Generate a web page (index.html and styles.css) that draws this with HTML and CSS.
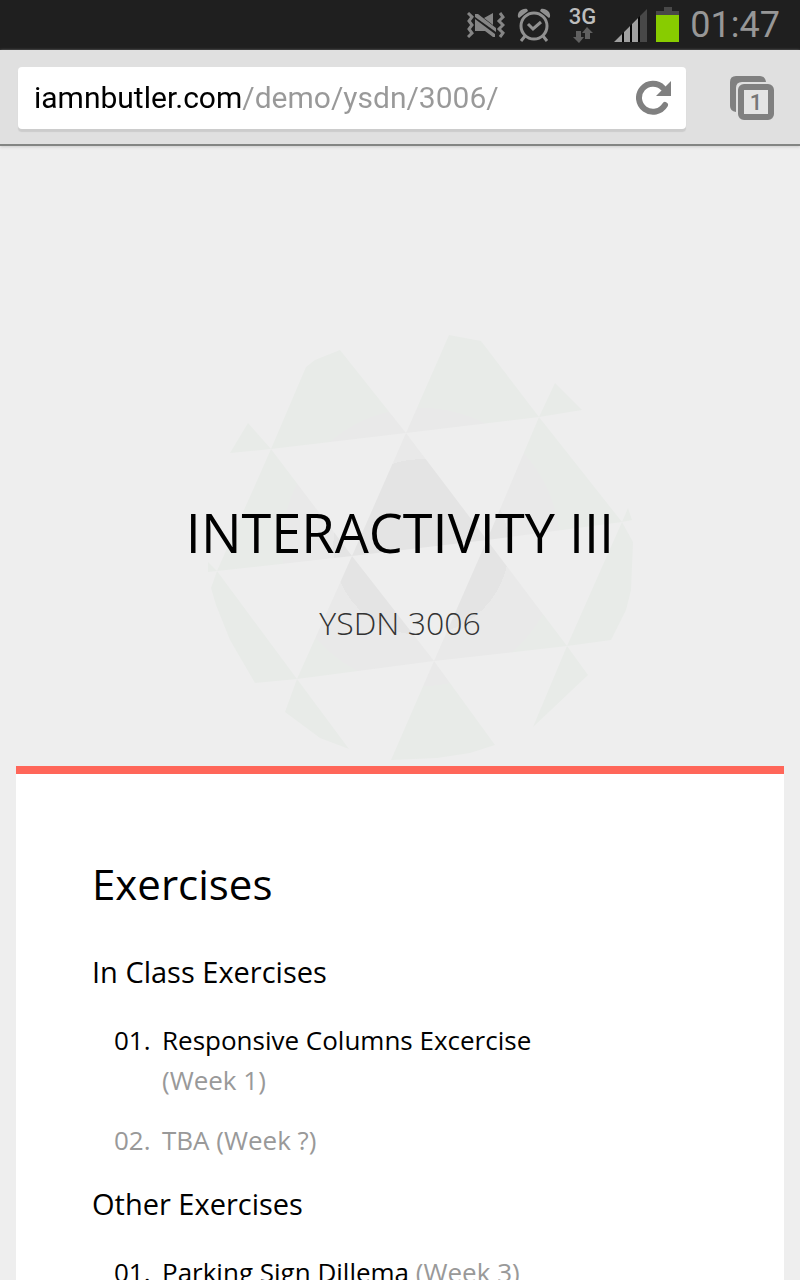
FILE: index.html
```html
<!DOCTYPE html>
<html lang="en">
<head>
<meta charset="utf-8">
<meta name="viewport" content="width=device-width, initial-scale=1">
<title>Interactivity III</title>
<link rel="stylesheet" href="styles.css">
</head>
<body>
<div class="screen">
  <div class="status-bar">
    <svg class="vibrate" width="38" height="26" viewBox="0 0 38 26" role="img" aria-label="Sound off">
      <path fill="none" stroke="#858585" stroke-width="3" d="M1 1l4 4-3 4 3 4-3 4 3 4-4 4M33 1l3 4-4 4 4 4-4 4 4 4-3 4"/>
      <path fill="#858585" d="M8 7l20 15v3h-2l-8-6H8zM8 2h3l18 14v4L8 5zM17 6l9-5v12z"/>
    </svg>
    <svg class="alarm" width="34" height="36" viewBox="0 0 34 36" role="img" aria-label="Alarm set">
      <g fill="none" stroke="#909090" stroke-width="3">
        <circle cx="17" cy="19" r="13"/>
        <path d="m11 17 5 5 8-7M8 29l-4 5M26 29l4 5"/>
      </g>
      <path fill="#909090" d="M1 10C0 5 5 1 10 2l1 2-9 7zM33 10c1-5-4-9-9-8l-1 2 9 7z"/>
    </svg>
    <div class="network">
      <span>3G</span>
      <svg width="20" height="16" viewBox="0 0 20 16" aria-hidden="true"><path fill="#606060" d="M3 4h5v6h3l-5 6-6-6h3zM14 0l6 6h-3v6h-5V6H9z"/></svg>
    </div>
    <svg class="signal" width="34" height="34" viewBox="0 0 34 34" role="img" aria-label="Signal strength">
      <path fill="#060606" d="M0 33 26 7v26z"/>
      <path fill="#a0a0a0" d="M0 33l8-8v8zM10 23l6-6v16h-6zM18 15l6-6v24h-6z"/>
      <path fill="#484848" d="M26 7l7-7v33h-7z"/>
    </svg>
    <svg class="battery" width="24" height="36" viewBox="0 0 24 36" role="img" aria-label="Battery">
      <path fill="#484848" d="M8 0h8v4h7v5H0V4h8z"/><path fill="#8c0" d="M0 8h23v27H0z"/>
    </svg>
    <time class="clock">01:47</time>
  </div>

  <div class="toolbar">
    <div class="omnibox">
      <input class="address" type="text" aria-label="Address" value="iamnbutler.com/demo/ysdn/3006/">
      <button class="icon-button" type="button" aria-label="Reload">
        <svg width="36" height="36" viewBox="0 0 36 36" aria-hidden="true">
          <path fill="none" stroke="#808080" stroke-width="6" stroke-linecap="round" d="M29 25A14 14 0 1 1 27 8"/>
          <path fill="#808080" d="M35 1v15H20z"/>
        </svg>
      </button>
    </div>
    <button class="icon-button tabs" type="button" aria-label="Open tabs: 1">
      <svg width="44" height="44" viewBox="0 0 44 44" aria-hidden="true">
        <path fill="#808080" d="M6 0h24q5 0 6 6H12q-6 0-6 6v24q-6-1-6-6V6q0-6 6-6z"/>
        <rect x="11" y="11" width="30" height="30" rx="3" fill="#e4e4e4" stroke="#808080" stroke-width="6"/>
        <text class="tab-count" x="26" y="34" text-anchor="middle">1</text>
      </svg>
    </button>
  </div>

  <main class="page">
    <header class="hero">
      <svg class="emblem" width="430" height="430" viewBox="206 333 430 430" aria-hidden="true">
        <defs>
          <radialGradient id="rings" gradientUnits="userSpaceOnUse" cx="421" cy="547" r="214">
            <stop offset=".41" stop-color="#e4e4e4"/>
            <stop offset=".41" stop-color="#e9e9e9"/>
            <stop offset=".65" stop-color="#e9e9e9"/>
            <stop offset=".65" stop-color="#e8ebe8"/>
          </radialGradient>
        </defs>
        <path fill="url(#rings)" d="M271 449l35-82 9-7 25-10 66 83zM230 453l18-30 23 26zM406 433l43-98 32 6 58 76zM539 417l16-34 27 27zM271 449l81 107-135 15zM406 433l81 107-135 16zM539 417l83 105-135 18zM622 522l6-14 4 12zM622 522l11 20-2 48-5 20-15 30-44 6zM217 571l80 108-42 4-25-43-14-35-5-17zM352 556l82 105-137 18zM487 540l80 106-133 15zM297 679l52 70-29-11-35-26zM434 661l61 84-25 8-33 5-46 2zM567 646l21 29-55 52zM208 562l9 9-9 1z"/>
      </svg>
      <h1 class="title">INTERACTIVITY III</h1>
      <p class="course">YSDN 3006</p>
    </header>
    <section class="card">
      <h2 class="section-title">Exercises</h2>
      <h3 class="group-title">In Class Exercises</h3>
      <ol class="exercises">
        <li class="exercise"><span>01.</span><p class="entry"><a href="#columns">Responsive Columns Excercise</a> <span class="muted">(Week 1)</span></p></li>
        <li class="exercise muted"><span>02.</span><p class="entry">TBA (Week ?)</p></li>
      </ol>
      <h3 class="group-title">Other Exercises</h3>
      <ol class="exercises">
        <li class="exercise"><span>01.</span><p class="entry"><a href="#parking">Parking Sign Dillema</a> <span class="muted">(Week 3)</span></p></li>
      </ol>
    </section>
  </main>
</div>
</body>
</html>
```
FILE: styles.css
```css
* { box-sizing: border-box; }
body { margin: 0; background: #eee; color: #000; font-family: "Open Sans", sans-serif; }
h1, h2, h3, p, ol { margin: 0; padding: 0; font-weight: 400; }

.screen { display: flex; flex-direction: column; height: 100vh; overflow: hidden; }

.status-bar {
  display: flex;
  flex: none;
  align-items: center;
  justify-content: flex-end;
  height: 50px;
  padding-right: 20px;
  background: #1f1f1f;
  font-family: Roboto, sans-serif;
}
.alarm { margin-left: 12px; }
.network {
  display: flex;
  flex-direction: column;
  align-items: center;
  margin: 0 18px;
  color: #bdbdbd;
  font-size: 22px;
  font-weight: 500;
  line-height: 20px;
}
.signal { margin-top: 2px; }
.battery { margin: 0 10px 0 8px; }
.clock { color: #979797; font-size: 36px; line-height: 48px; }

.toolbar {
  display: flex;
  flex: none;
  align-items: center;
  gap: 44px;
  height: 96px;
  padding: 2px 26px 0 18px;
  background: #e0e0e0;
  border-bottom: 2px solid #838583;
  box-shadow: 0 1px 3px #ccc;
}
.omnibox {
  display: flex;
  flex: 1;
  align-items: center;
  height: 62px;
  padding: 0 14px 0 16px;
  background: #fff;
  border-radius: 4px;
  box-shadow: 0 3px 1px #ccc;
}
.address {
  flex: 1;
  min-width: 0;
  padding: 0;
  border: 0;
  outline: 0;
  background: linear-gradient(to right, #000 208px, #999 208px);
  background-clip: text;
  -webkit-background-clip: text;
  color: transparent;
  font: 30px/40px Roboto, sans-serif;
}
.icon-button { padding: 0; border: 0; background: none; line-height: 0; }
.tab-count { fill: #777; font: 500 22px Roboto, sans-serif; }

.page { flex: 1; min-height: 0; overflow: hidden; padding: 0 16px; }
.hero { position: relative; padding: 350px 0 120px; text-align: center; }
.emblem { position: absolute; bottom: 3px; left: calc(50% - 194px); }
.title { position: relative; font-size: 54px; line-height: 72px; }
.course { position: relative; margin-top: 32px; color: #333; font-size: 32px; font-weight: 300; line-height: 46px; }

.card { padding: 80px 76px; background: #fff; border-top: 8px solid #ff6659; }
.section-title { font-size: 42px; line-height: 60px; }
.group-title { margin-top: 38px; font-size: 29px; line-height: 40px; }
.exercises + .group-title { margin-top: 24px; }
.exercises { list-style: none; padding: 28px 0 0 22px; font-size: 26px; line-height: 40px; }
.exercise { display: grid; grid-template-columns: 48px 1fr; }
.exercise + .exercise { margin-top: 20px; }
.entry { max-width: 400px; }
.exercise a { color: inherit; text-decoration: none; }
.muted { color: #999; }
```
